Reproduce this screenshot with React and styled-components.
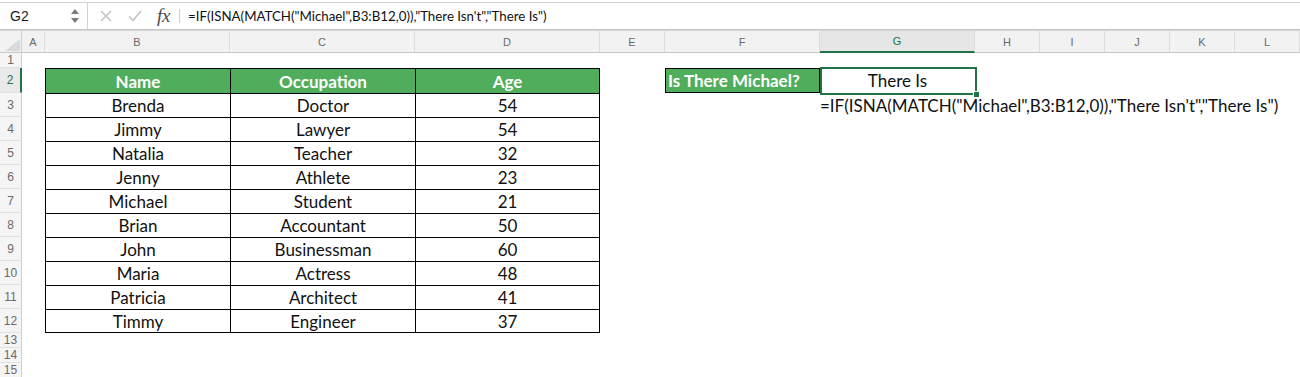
import React from 'react';
import styled, { createGlobalStyle, css } from 'styled-components';

const FILL = '#4fad5b';
const SEL = '#217346';
const CELL_FONT = "'Lato', 'Open Sans', 'Liberation Sans', sans-serif";
const UI_FONT = "'Liberation Sans', Arial, sans-serif";

const GlobalStyle = createGlobalStyle`
  html, body { margin: 0; padding: 0; background: #ffffff; }
  body { font-family: ${CELL_FONT}; }
`;

const Window = styled.div`
  width: 1300px;
  height: 377px;
  overflow: hidden;
  background: #ffffff;
`;

/* ---------- formula bar ---------- */
const FormulaBar = styled.div`
  display: flex;
  align-items: stretch;
  margin-top: 2px;
  height: 28px;
  box-sizing: border-box;
  border-top: 1px solid #d3d3d3;
  border-bottom: 1px solid #c9c9c9;
`;

const NameBox = styled.div`
  width: 88px;
  box-sizing: border-box;
  border-right: 1px solid #d3d3d3;
  display: flex;
  align-items: center;
  justify-content: space-between;
  padding: 0 8px 0 10px;
  font: 14px ${UI_FONT};
  color: #1e1e1e;
`;

const Spinner = styled.div`
  display: flex;
  flex-direction: column;
  gap: 4px;
`;

const Arrow = styled.span`
  width: 0;
  height: 0;
  border-left: 4px solid transparent;
  border-right: 4px solid transparent;
  ${(p) =>
    p.$down
      ? css`border-top: 5px solid #7a7a7a;`
      : css`border-bottom: 5px solid #7a7a7a;`}
`;

const Actions = styled.div`
  display: flex;
  align-items: center;
  gap: 16px;
  padding-left: 12px;
  width: 91px;
  box-sizing: border-box;
`;

const Fx = styled.span`
  font: italic 19px 'Liberation Serif', 'DejaVu Serif', serif;
  color: #4a4a4a;
  letter-spacing: -0.3px;
  margin-left: -1px;
`;

const Divider = styled.span`
  align-self: center;
  width: 1px;
  height: 14px;
  background: #cfcfcf;
`;

const FormulaText = styled.div`
  display: flex;
  align-items: center;
  padding-left: 8px;
  font: 13.3px ${CELL_FONT};
  color: #111;
  white-space: nowrap;
`;

/* ---------- sheet ---------- */
const Sheet = styled.div`
  display: grid;
  grid-template-columns: 22px 23px 185px 185px 185px 65px 155px 155px 65px 65px 65px 65px 65px;
  grid-template-rows: 23px 15px 25px repeat(10, 24px) 15px 15px 15px;
`;

const Corner = styled.div`
  position: relative;
  background: #f2f2f2;
  border-top: 1px solid #d6d6d6;
  border-right: 1px solid #cfcfcf;
  border-bottom: 1px solid #c6c6c6;
  box-sizing: border-box;
  svg { position: absolute; right: 1px; bottom: 1px; }
`;

const ColHeader = styled.div`
  box-sizing: border-box;
  display: flex;
  align-items: center;
  justify-content: center;
  background: ${(p) => (p.$selected ? '#e6e6e6' : '#f2f2f2')};
  border-top: 1px solid #d6d6d6;
  border-right: 1px solid #dcdcdc;
  border-bottom: ${(p) => (p.$selected ? `2px solid ${SEL}` : '1px solid #c6c6c6')};
  font: 11px ${UI_FONT};
  color: ${(p) => (p.$selected ? SEL : '#6a6a6a')};
`;

const RowHeader = styled.div`
  box-sizing: border-box;
  display: flex;
  align-items: center;
  justify-content: center;
  background: ${(p) => (p.$selected ? '#e9e9e9' : '#f5f5f5')};
  border-right: ${(p) => (p.$selected ? `2px solid ${SEL}` : '1px solid #cfcfcf')};
  border-bottom: 1px solid #e2e2e2;
  font: 12px ${UI_FONT};
  color: ${(p) => (p.$selected ? SEL : '#6a6a6a')};
`;

const Cell = styled.div`
  position: relative;
  box-sizing: border-box;
  display: flex;
  align-items: center;
  justify-content: ${(p) => p.$align || 'flex-start'};
  padding: 0 ${(p) => (p.$overflow ? '0' : '2px')};
  white-space: nowrap;
  font-family: ${CELL_FONT};
  font-size: 17px;
  color: #111;
  ${(p) => p.$left && css`border-left: 1px solid #000;`}
  ${(p) => p.$top && css`border-top: 1px solid #000;`}
  ${(p) => p.$right && css`border-right: 1px solid #000;`}
  ${(p) => p.$bottom && css`border-bottom: 1px solid #000;`}
  ${(p) =>
    p.$fill &&
    css`
      background: ${FILL};
      color: #ffffff;
      font-weight: 700;
    `}
  ${(p) =>
    p.$active &&
    css`
      &::after {
        content: '';
        position: absolute;
        top: -1px;
        left: 0;
        right: -2px;
        bottom: -2px;
        border: 2px solid ${SEL};
        pointer-events: none;
      }
      &::before {
        content: '';
        position: absolute;
        right: -5px;
        bottom: -5px;
        width: 5px;
        height: 5px;
        background: ${SEL};
        border: 1px solid #fff;
        z-index: 2;
      }
    `}
`;

const COLS = ['A', 'B', 'C', 'D', 'E', 'F', 'G', 'H', 'I', 'J', 'K', 'L'];

const people = [
  ['Brenda', 'Doctor', 54],
  ['Jimmy', 'Lawyer', 54],
  ['Natalia', 'Teacher', 32],
  ['Jenny', 'Athlete', 23],
  ['Michael', 'Student', 21],
  ['Brian', 'Accountant', 50],
  ['John', 'Businessman', 60],
  ['Maria', 'Actress', 48],
  ['Patricia', 'Architect', 41],
  ['Timmy', 'Engineer', 37],
];

const FORMULA = '=IF(ISNA(MATCH("Michael",B3:B12,0)),"There Isn\'t","There Is")';

function cellFor(row, colIdx) {
  const col = COLS[colIdx];
  const key = `${col}${row}`;
  if (colIdx >= 1 && colIdx <= 3 && row >= 2 && row <= 12) {
    const isHead = row === 2;
    const text = isHead
      ? ['Name', 'Occupation', 'Age'][colIdx - 1]
      : people[row - 3][colIdx - 1];
    return (
      <Cell
        key={key}
        $align="center"
        $left
        $top
        $right={colIdx === 3}
        $bottom={row === 12}
        $fill={isHead}
      >
        {text}
      </Cell>
    );
  }
  if (col === 'F' && row === 2) {
    return (
      <Cell key={key} $left $top $right $bottom $fill>
        Is There Michael?
      </Cell>
    );
  }
  if (col === 'G' && row === 2) {
    return (
      <Cell key={key} $align="center" $active>
        There Is
      </Cell>
    );
  }
  if (col === 'G' && row === 3) {
    return (
      <Cell key={key} $overflow>
        {FORMULA}
      </Cell>
    );
  }
  return <Cell key={key} />;
}

const CloseIcon = () => (
  <svg width="12" height="12" viewBox="0 0 12 12">
    <path d="M1 1 L11 11 M11 1 L1 11" stroke="#bdbdbd" strokeWidth="1.4" fill="none" />
  </svg>
);

const CheckIcon = () => (
  <svg width="14" height="12" viewBox="0 0 14 12">
    <path d="M1 6.5 L5 10.5 L13 1" stroke="#bdbdbd" strokeWidth="1.4" fill="none" />
  </svg>
);

export default function App() {
  const rows = [];
  for (let r = 1; r <= 15; r++) {
    rows.push(
      <RowHeader key={`rh${r}`} $selected={r === 2}>
        {r}
      </RowHeader>
    );
    for (let c = 0; c < COLS.length; c++) rows.push(cellFor(r, c));
  }

  return (
    <Window>
      <GlobalStyle />
      <FormulaBar>
        <NameBox>
          <span>G2</span>
          <Spinner>
            <Arrow />
            <Arrow $down />
          </Spinner>
        </NameBox>
        <Actions>
          <CloseIcon />
          <CheckIcon />
          <Fx>fx</Fx>
        </Actions>
        <Divider />
        <FormulaText>{FORMULA}</FormulaText>
      </FormulaBar>
      <Sheet>
        <Corner>
          <svg width="15" height="12" viewBox="0 0 15 12">
            <polygon points="15,0 15,12 0,12" fill="#d9d9d9" />
          </svg>
        </Corner>
        {COLS.map((c) => (
          <ColHeader key={c} $selected={c === 'G'}>
            {c}
          </ColHeader>
        ))}
        {rows}
      </Sheet>
    </Window>
  );
}
